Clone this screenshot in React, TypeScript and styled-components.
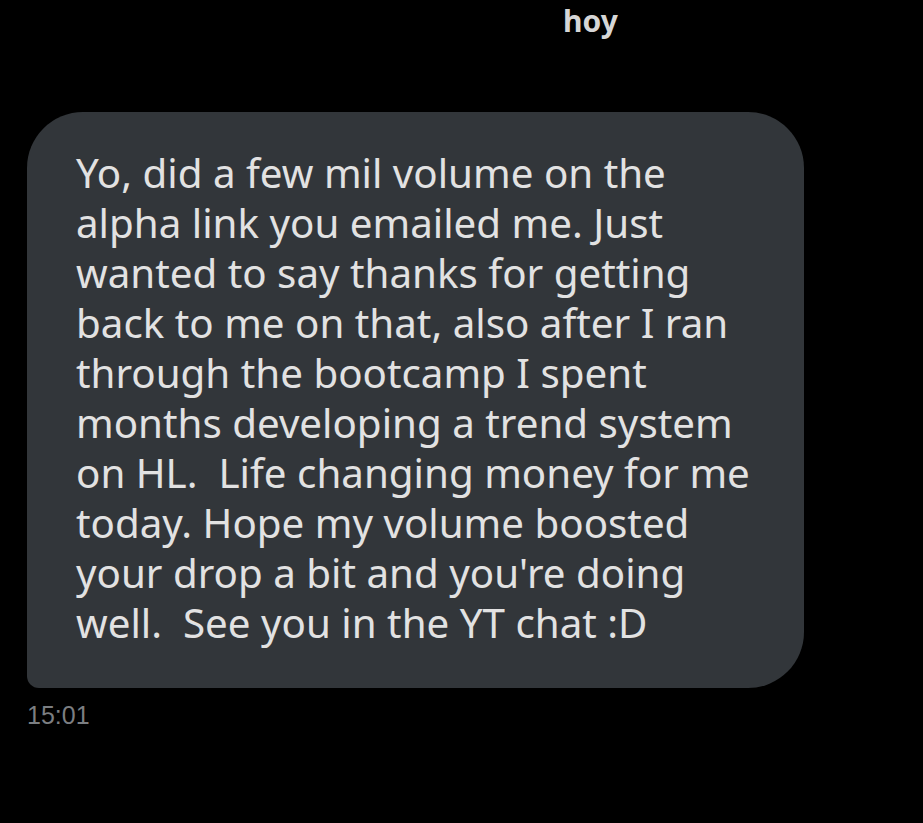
import * as React from 'react';
import styled, { createGlobalStyle } from 'styled-components';

const GlobalStyle = createGlobalStyle`
    html, body {
        margin: 0;
        padding: 0;
        background: #000000;
    }
    body {
        width: 923px;
        height: 823px;
        overflow: hidden;
        font-family: "Noto Sans", "Open Sans", sans-serif;
    }
`;

const Screen = styled.div`
    display: flex;
    flex-direction: column;
    align-items: flex-start;
    padding: 0 27px;
    height: 823px;
    box-sizing: border-box;
`;

const DayLabel = styled.div`
    align-self: stretch;
    text-align: center;
    padding-left: 258px;
    font-size: 30px;
    font-weight: 700;
    line-height: 42px;
    color: #d6d6d6;
    margin-bottom: 70px;
`;

const Bubble = styled.div`
    background: #32363a;
    width: 777px;
    box-sizing: border-box;
    border-radius: 56px 56px 56px 12px;
    padding: 36px 20px 40px 49px;
`;

const Line = styled.span`
    display: block;
    font-size: 40.3px;
    line-height: 50px;
    color: #e2e2e2;
    white-space: pre;
`;

const Time = styled.div`
    margin-top: 12px;
    font-family: "Liberation Sans", Arial, sans-serif;
    font-size: 25px;
    line-height: 30px;
    color: #7b7e82;
`;

const lines = [
    'Yo, did a few mil volume on the',
    'alpha link you emailed me. Just',
    'wanted to say thanks for getting',
    'back to me on that, also after I ran',
    'through the bootcamp I spent',
    'months developing a trend system',
    'on HL.  Life changing money for me',
    'today. Hope my volume boosted',
    "your drop a bit and you're doing",
    'well.  See you in the YT chat :D',
];

export default function App() {
    return <>
        <GlobalStyle />
        <Screen>
            <DayLabel>hoy</DayLabel>
            <Bubble>
                {lines.map((l, i) => <Line key={i}>{l}</Line>)}
            </Bubble>
            <Time>15:01</Time>
        </Screen>
    </>;
}
